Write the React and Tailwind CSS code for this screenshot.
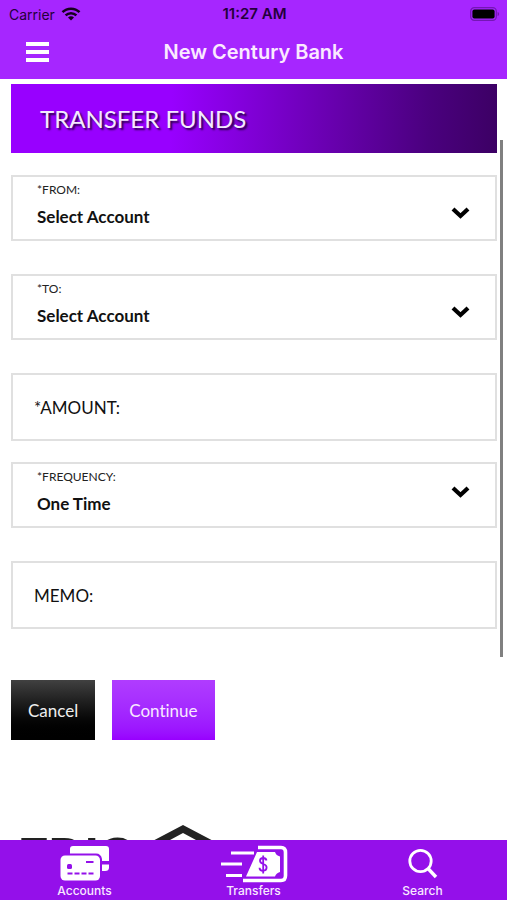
import { useState } from "react";

function WifiIcon() {
  return (
    <svg width="20" height="14" viewBox="0 0 20 14" fill="none" stroke="#16001f" strokeWidth="2.500" aria-hidden="true">
      <path d="M1.500 5.200A12 12 0 0 1 18.500 5.200" />
      <path d="M4.600 8.400A7.600 7.600 0 0 1 15.400 8.400" />
      <path d="M10 13.600L7 10.600A4.200 4.200 0 0 1 13 10.600Z" fill="#16001f" stroke="none" />
    </svg>
  );
}

function BatteryIcon() {
  return (
    <svg width="30" height="14" viewBox="0 0 30 14" aria-hidden="true">
      <rect x="0.700" y="0.700" width="25.600" height="12.600" rx="3.600" fill="none" stroke="#7416b5" strokeWidth="1.200" />
      <rect x="2.400" y="2.400" width="22.200" height="9.200" rx="2" fill="#000" />
      <path d="M27.600 5C29.600 5.400 29.600 8.600 27.600 9Z" fill="#7416b5" />
    </svg>
  );
}

function Chevron({ className }) {
  return (
    <svg
      className={`pointer-events-none absolute right-6 ${className}`}
      width="22"
      height="16"
      viewBox="0 0 22 16"
      fill="none"
      stroke="#000"
      strokeWidth="4.200"
      aria-hidden="true"
    >
      <path d="M4 4L11.500 11L19 4" />
    </svg>
  );
}

function AccountsIcon() {
  return (
    <svg width="50" height="36" viewBox="0 0 50 36" fill="#fff" aria-hidden="true">
      <path d="M10 7.500V3Q10 0 13 0H46Q49 0 49 3V15H42V13Q41 7.500 36 7.500Z" />
      <path d="M42 18.500H49V21.500Q49 25 45 25H42Z" />
      <rect x="0.500" y="9.500" width="39.500" height="25" rx="4.500" />
      <g fill="#9410ea">
        <rect x="7" y="18" width="5" height="5" rx="1.500" />
        <rect x="26" y="15" width="7.500" height="2" />
        <path d="M7.500 26.500h5v2h-5zM14.500 26.500h5v2h-5zM21.500 26.500h5v2h-5zM28.500 26.500h5v2h-5z" />
      </g>
    </svg>
  );
}

function TransfersIcon() {
  return (
    <svg width="68" height="38" viewBox="0 0 68 38" fill="none" stroke="#fff" aria-hidden="true">
      <path d="M11 8H34M1 19H22M6 30.500H22" strokeWidth="3.200" />
      <path d="M38 2.500H61Q65.500 2.500 65.500 7.500V30.500Q65.500 35.500 61 35.500H23" strokeWidth="3.600" />
      <path d="M37 7H55Q56 10.500 60 11.500V27Q56 28 55 31.500H26Z" fill="#fff" stroke="none" />
      <path
        d="M46.500 15.500Q46 13 43.200 13Q40 13 40 15.800Q40 18 43.200 19Q46.800 20 46.600 22.800Q46.400 25.800 43 25.800Q39.600 25.800 39.500 22.800M43.200 10.500V28.500"
        stroke="#9410ea"
        strokeWidth="1.800"
      />
    </svg>
  );
}

function SearchIcon() {
  return (
    <svg width="30" height="32" viewBox="0 0 30 32" fill="none" stroke="#fff" aria-hidden="true">
      <circle cx="12.500" cy="13" r="10.700" strokeWidth="2.800" />
      <path d="M20 20.500L28 29" strokeWidth="3.400" />
    </svg>
  );
}

function HouseLogo() {
  return (
    <svg width="76" height="60" viewBox="0 0 76 60" aria-hidden="true">
      <path
        d="M38 0L76 20V32H70V60H6V32H0V20ZM38 8L12 22V52H64V22Z"
        fill="#222"
        fillRule="evenodd"
      />
      <path d="M24 28H52V35H24ZM24 40H52V47H24Z" fill="#222" />
    </svg>
  );
}

function SelectField({ id, label, options, chevronClass = "top-[2px]" }) {
  const [value, setValue] = useState(options[0]);

  return (
    <div className="h-[66px] border-2 border-[#e0e0e0] pt-1 pl-6">
      <label htmlFor={id} className="block h-[18px] text-[12px] leading-[18px] text-[#222]">
        {label}
      </label>
      <div className="relative mt-1">
        <select
          id={id}
          value={value}
          onChange={(e) => setValue(e.target.value)}
          className="block h-7 w-full appearance-none bg-transparent text-[17px] font-bold text-[#111] outline-none"
        >
          {options.map((option) => (
            <option key={option}>{option}</option>
          ))}
        </select>
        <Chevron className={chevronClass} />
      </div>
    </div>
  );
}

function TextField({ id, label, inputMode }) {
  return (
    <div className="flex h-[68px] items-center gap-2 border-2 border-[#e0e0e0] px-[21px] pt-[2px]">
      <label htmlFor={id} className="text-[17px] text-[#111]">
        {label}
      </label>
      <input id={id} type="text" inputMode={inputMode} className="h-full min-w-0 flex-1 bg-transparent text-[17px] outline-none" />
    </div>
  );
}

const tabs = [
  { name: "Accounts", Icon: AccountsIcon },
  { name: "Transfers", Icon: TransfersIcon },
  { name: "Search", Icon: SearchIcon },
];

export default function App() {
  return (
    <div className="flex h-screen flex-col bg-white font-['Lato',sans-serif]">
      <header className="bg-[#a626ff] font-['Inter',sans-serif]">
        <div className="grid h-7 grid-cols-[1fr_auto_1fr] items-center pl-[9px] pr-[7px] text-[14px] text-[#24003b]">
          <div className="flex items-center gap-[6px]">
            <span>Carrier</span>
            <WifiIcon />
          </div>
          <span className="text-center text-[15px] font-semibold">11:27 AM</span>
          <div className="flex justify-end">
            <BatteryIcon />
          </div>
        </div>
        <div className="grid h-[51px] grid-cols-[75px_1fr_75px] items-center pb-1">
          <button aria-label="Menu" className="flex w-[23px] flex-col gap-1 justify-self-center">
            <span className="h-1 w-full bg-white"></span>
            <span className="h-1 w-full bg-white"></span>
            <span className="h-1 w-full bg-white"></span>
          </button>
          <h1 className="text-center text-[20px] font-semibold text-[#fbeaff]">New Century Bank</h1>
        </div>
      </header>

      <div className="relative min-h-0 flex-1">
        <main className="h-full overflow-y-auto pl-[11px] pr-[10px] pt-[5px] [scrollbar-width:none]">
          <h2 className="flex h-[69px] items-center bg-[linear-gradient(92deg,#9800ff_0%,#9800ff_33%,#6b00b3_64%,#4a007e_86%,#3c0064_100%)] pl-[29px] text-[24px] text-[#f4e8ff] [text-shadow:2px_2px_2px_rgba(0,0,0,0.7)]">
            TRANSFER FUNDS
          </h2>

          <form className="mt-[22px]" onSubmit={(e) => e.preventDefault()}>
            <div className="flex flex-col gap-[33px]">
              <SelectField id="from" label="*FROM:" options={["Select Account", "Checking", "Savings"]} />
              <SelectField id="to" label="*TO:" options={["Select Account", "Checking", "Savings"]} />
              <TextField id="amount" label="*AMOUNT:" inputMode="decimal" />
            </div>
            <div className="mt-[21px] flex flex-col gap-[33px]">
              <SelectField
                id="frequency"
                label="*FREQUENCY:"
                options={["One Time", "Weekly", "Monthly"]}
                chevronClass="-top-[6px]"
              />
              <TextField id="memo" label="MEMO:" />
            </div>
            <div className="mt-[51px] flex gap-[17px] text-[17px] [font-variant-ligatures:none]">
              <button type="button" className="h-[60px] bg-linear-to-b from-[#414141] to-black px-[17px] pt-[2px] text-[#eee]">
                Cancel
              </button>
              <button type="submit" className="h-[60px] bg-linear-to-b from-[#b03cff] to-[#9800ff] px-[17px] pt-[2px] text-[#f8e8ff]">
                Continue
              </button>
            </div>
          </form>

          <footer className="mt-[85px] flex gap-[10px] pl-[7px] text-[#222]">
            <span className="pt-[6px] font-['Liberation_Sans',sans-serif] text-[50px] leading-[50px] font-bold">FDIC</span>
            <HouseLogo />
          </footer>
        </main>
        <div className="absolute right-1 top-[8%] h-[68%] w-[3px] bg-[#808080]"></div>
      </div>

      <nav className="grid h-[60px] grid-cols-3 bg-[#9410ea] font-['Inter',sans-serif] text-[12px] font-medium text-[#f8e8ff]">
        {tabs.map(({ name, Icon }) => (
          <a key={name} href="#" className="flex flex-col items-center">
            <span className="flex h-11 items-center pt-1">
              <Icon />
            </span>
            <span className="leading-[14px]">{name}</span>
          </a>
        ))}
      </nav>
    </div>
  );
}
